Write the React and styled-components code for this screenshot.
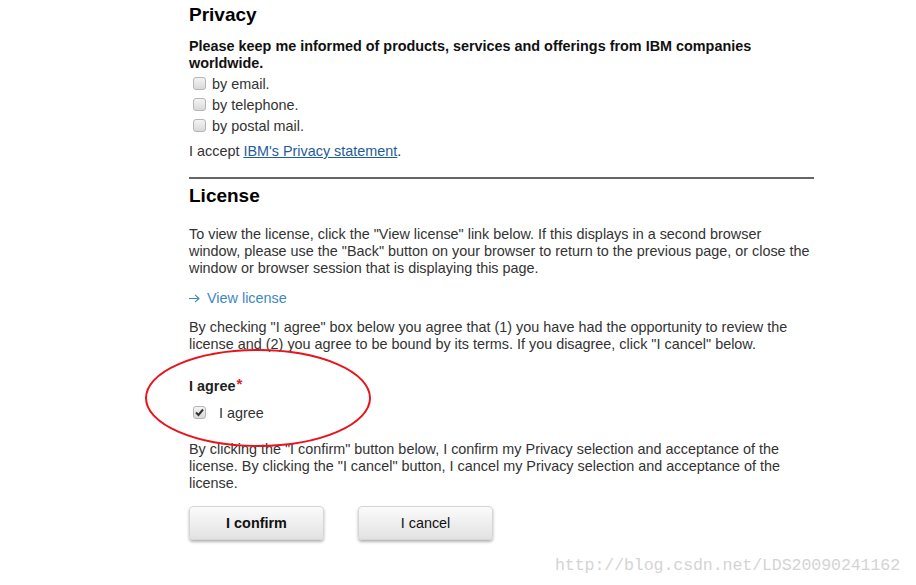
import React from "react";
import styled, { createGlobalStyle } from "styled-components";

const GlobalStyle = createGlobalStyle`
  body {
    margin: 0;
    background: #fff;
    font-family: Arial, "Liberation Sans", sans-serif;
    color: #333;
  }
`;

const Page = styled.div`
  position: relative;
  width: 916px;
  height: 585px;
  overflow: hidden;
`;

const Column = styled.div`
  width: 625px;
  padding-left: 189px;
  font-size: 14.4px;
  line-height: 17px;
`;

const Heading = styled.h2`
  margin: ${p => p.top || 0}px 0 0;
  font-size: 19px;
  line-height: 22px;
  font-weight: bold;
  color: #000;
`;

const Para = styled.p`
  margin: ${p => p.top || 0}px 0 0;
  font-weight: ${p => (p.bold ? "bold" : "normal")};
  color: ${p => (p.bold ? "#111" : "#333")};
`;

const Options = styled.div`
  margin-top: 2px;
  display: flex;
  flex-direction: column;
`;

const Row = styled.label`
  display: flex;
  align-items: center;
  height: 21px;
  gap: ${p => p.gap || 6}px;
  padding-left: 4px;
  margin-top: ${p => p.top || 0}px;
`;

const Box = styled.span`
  width: 11px;
  height: 11px;
  border: 1px solid #b5b5b5;
  border-radius: 3px;
  background: linear-gradient(#f4f4f4, #d9d9d9);
  display: flex;
  align-items: center;
  justify-content: center;
  margin-top: -3px;
`;

const Check = ({ checked }) => (
  <Box>
    {checked && (
      <svg width="9" height="9" viewBox="0 0 9 9">
        <path d="M1 4.5 L3.5 7 L8 1.5" fill="none" stroke="#333" strokeWidth="2" />
      </svg>
    )}
  </Box>
);

const Link = styled.a`
  color: #1f5d99;
  text-decoration: underline;
`;

const Rule = styled.hr`
  margin: 17px 0 0;
  border: none;
  height: 2px;
  background: #666;
`;

const ViewLink = styled.a`
  display: flex;
  align-items: center;
  gap: 7px;
  margin-top: 13px;
  color: #3d87c4;
  text-decoration: none;
`;

const Arrow = () => (
  <svg width="11" height="9" viewBox="0 0 11 9">
    <path d="M0 4.5 H10 M6 0.8 L10 4.5 L6 8.2" fill="none" stroke="#3d87c4" strokeWidth="1.1" />
  </svg>
);

const Label = styled.div`
  margin-top: 25px;
  font-weight: bold;
  color: #222;
`;

const Star = styled.sup`
  color: #d9232e;
  font-size: 15px;
  line-height: 0;
  vertical-align: 2px;
  margin-left: 1px;
`;

const Buttons = styled.div`
  display: flex;
  gap: 34px;
  margin-top: 14px;
`;

const Button = styled.button`
  width: 135px;
  height: 34px;
  border: 1px solid #d6d6d6;
  border-radius: 4px;
  background: linear-gradient(#fbfbfb, #e2e2e2);
  box-shadow: 0 2px 3px rgba(0, 0, 0, 0.3);
  font-family: Arial, "Liberation Sans", sans-serif;
  font-size: 14.4px;
  font-weight: ${p => (p.primary ? "bold" : "normal")};
  color: #111;
`;

const Ellipse = styled.svg`
  position: absolute;
  left: 144px;
  top: 349px;
  pointer-events: none;
`;

const Watermark = styled.div`
  position: absolute;
  left: 555px;
  top: 556px;
  font-family: "Liberation Mono", monospace;
  font-size: 16.6px;
  color: #d4d4d4;
  letter-spacing: -0.1px;
`;

export default function App() {
  return (
    <Page>
      <GlobalStyle />
      <Column>
        <Heading top={4}>Privacy</Heading>
        <Para bold top={12}>
          Please keep me informed of products, services and offerings from IBM companies worldwide.
        </Para>
        <Options>
          <Row><Check />by email.</Row>
          <Row><Check />by telephone.</Row>
          <Row><Check />by postal mail.</Row>
        </Options>
        <Para top={6}>
          I accept <Link href="#">IBM's Privacy statement</Link>.
        </Para>
        <Rule />
        <Heading top={6}>License</Heading>
        <Para top={19}>
          To view the license, click the "View license" link below. If this displays in a second browser
          window, please use the "Back" button on your browser to return to the previous page, or close the
          window or browser session that is displaying this page.
        </Para>
        <ViewLink href="#"><Arrow />View license</ViewLink>
        <Para top={12}>
          By checking "I agree" box below you agree that (1) you have had the opportunity to review the
          license and (2) you agree to be bound by its terms. If you disagree, click "I cancel" below.
        </Para>
        <Label>
          I agree<Star>*</Star>
        </Label>
        <Row top={8} gap={13}><Check checked />I agree</Row>
        <Para top={17}>
          By clicking the "I confirm" button below, I confirm my Privacy selection and acceptance of the
          license. By clicking the "I cancel" button, I cancel my Privacy selection and acceptance of the
          license.
        </Para>
        <Buttons>
          <Button primary>I confirm</Button>
          <Button>I cancel</Button>
        </Buttons>
      </Column>
      <Ellipse width="230" height="100" viewBox="0 0 230 100">
        <ellipse cx="114" cy="49" rx="112" ry="48" fill="none" stroke="#e8141c" strokeWidth="2" />
      </Ellipse>
      <Watermark>http://blog.csdn.net/LDS20090241162</Watermark>
    </Page>
  );
}
